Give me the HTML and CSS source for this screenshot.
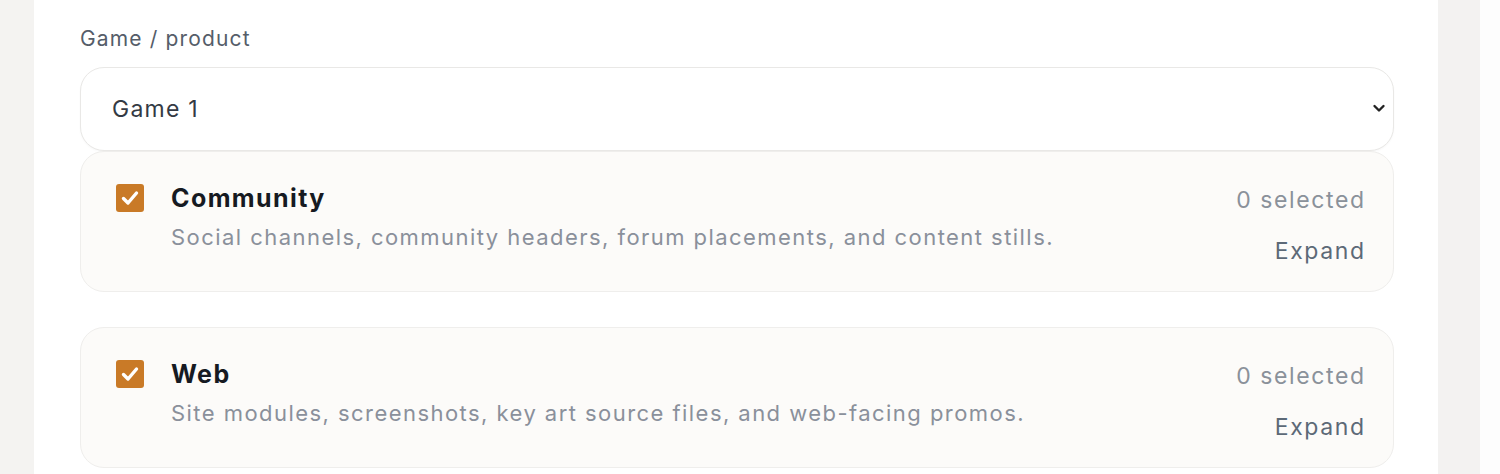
FILE: index.html
```html
<!DOCTYPE html>
<html>
<head>
<meta charset="utf-8">
<link rel="stylesheet" href="styles.css">
</head>
<body>
<div class="shell">
  <div class="gutter-left"></div>
  <main class="panel">
    <div class="field-label">Game / product</div>
    <div class="select">
      <span class="select-value">Game 1</span>
      <svg class="chevron" width="16" height="16" viewBox="0 0 16 16"><path d="M3.5 6 L8 10.5 L12.5 6" fill="none" stroke="#222" stroke-width="2.4" stroke-linecap="round" stroke-linejoin="round"/></svg>
    </div>
    <div class="card">
      <div class="check"><svg width="28" height="28" viewBox="0 0 28 28"><path d="M7.5 14.5 L12 19 L20.5 9" fill="none" stroke="#fff" stroke-width="3.4" stroke-linecap="round" stroke-linejoin="round"/></svg></div>
      <div class="card-body">
        <div class="card-title">Community</div>
        <div class="card-desc">Social channels, community headers, forum placements, and content stills.</div>
      </div>
      <div class="card-meta">
        <div class="count">0 selected</div>
        <div class="expand">Expand</div>
      </div>
    </div>
    <div class="card card-spaced">
      <div class="check"><svg width="28" height="28" viewBox="0 0 28 28"><path d="M7.5 14.5 L12 19 L20.5 9" fill="none" stroke="#fff" stroke-width="3.4" stroke-linecap="round" stroke-linejoin="round"/></svg></div>
      <div class="card-body">
        <div class="card-title">Web</div>
        <div class="card-desc">Site modules, screenshots, key art source files, and web-facing promos.</div>
      </div>
      <div class="card-meta">
        <div class="count">0 selected</div>
        <div class="expand">Expand</div>
      </div>
    </div>
  </main>
  <div class="gutter-right"></div>
  <div class="edge"></div>
</div>
</body>
</html>
```
FILE: styles.css
```css
* { box-sizing: border-box; }
html, body { margin: 0; padding: 0; }
body {
  font-family: Inter, "Noto Sans", sans-serif;
  background: #ffffff;
  height: 474px;
  overflow: hidden;
}
.shell {
  display: grid;
  grid-template-columns: 34px 1404px 42px 20px;
  height: 474px;
}
.gutter-left { background: #f4f3f1; }
.gutter-right { background: #f3f2f1; }
.edge { background: #fdfdfd; }
.panel {
  background: #ffffff;
  padding: 26px 44px 0 46px;
}
.field-label {
  font-size: 21px;
  color: #555d69;
  height: 26px;
  line-height: 26px;
  margin-bottom: 15px;
  letter-spacing: 1.15px;
}
.select {
  height: 84px;
  border: 1px solid #e9e8e6;
  border-radius: 24px;
  background: #fff;
  display: flex;
  align-items: center;
  justify-content: space-between;
  padding: 0 6px 0 31px;
  box-shadow: 0 1px 2px rgba(0,0,0,0.03);
}
.select-value {
  font-size: 23px;
  color: #343a44;
  letter-spacing: 1.25px;
}
.chevron { margin-top: -2px; }
.card {
  margin-top: 0;
  height: 141px;
  border: 1px solid #efeeec;
  border-radius: 24px;
  background: #fcfbf9;
  display: flex;
  align-items: flex-start;
  padding: 31px 29px 0 35px;
}
.card-spaced { margin-top: 35px; }
.check {
  width: 28px;
  height: 28px;
  background: #c97a27;
  border-radius: 3px;
  margin-top: 1px;
  flex: none;
}
.check svg { display: block; }
.card-body {
  margin-left: 27px;
  flex: 1;
  padding-top: 1px;
}
.card-title {
  font-size: 25px;
  font-weight: 700;
  color: #161a22;
  line-height: 28px;
  letter-spacing: 1.4px;
}
.card-desc {
  margin-top: 12px;
  font-size: 22px;
  color: #8a909b;
  line-height: 26px;
  letter-spacing: 1.45px;
}
.card-meta {
  margin-top: 2px;
  text-align: right;
  display: flex;
  flex-direction: column;
  align-items: flex-end;
}
.count {
  font-size: 23px;
  color: #8a919a;
  line-height: 30px;
  letter-spacing: 1.6px;
  margin-right: -1.6px;
}
.expand {
  margin-top: 21px;
  font-size: 23px;
  color: #5c6977;
  line-height: 30px;
  letter-spacing: 1.6px;
  margin-right: -1.6px;
}
```
